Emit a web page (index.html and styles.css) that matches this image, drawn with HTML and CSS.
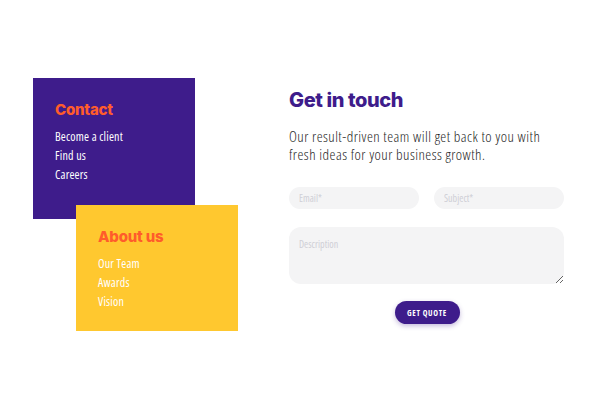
FILE: index.html
```html
<!DOCTYPE html>
<html>
<head>
<meta charset="utf-8">
<link rel="stylesheet" href="styles.css">
</head>
<body>
<div class="page">
  <div class="cards">
    <div class="card card-purple">
      <h3 class="card-title">Contact</h3>
      <ul class="links">
        <li>Become a client</li>
        <li>Find us</li>
        <li>Careers</li>
      </ul>
    </div>
    <div class="card card-yellow">
      <h3 class="card-title">About us</h3>
      <ul class="links">
        <li>Our Team</li>
        <li>Awards</li>
        <li>Vision</li>
      </ul>
    </div>
  </div>
  <div class="contact">
    <h2 class="title">Get in touch</h2>
    <p class="lead">Our result-driven team will get back to you with fresh ideas for your business growth.</p>
    <form class="form">
      <div class="row">
        <input class="field" type="text" placeholder="Email*">
        <input class="field" type="text" placeholder="Subject*">
      </div>
      <textarea class="field area" placeholder="Description"></textarea>
      <div class="actions">
        <button type="button" class="btn">GET QUOTE</button>
      </div>
    </form>
  </div>
</div>
</body>
</html>
```

FILE: styles.css
```css
html, body {
  margin: 0;
  padding: 0;
  background: #ffffff;
}
body {
  font-family: "Open Sans", sans-serif;
  font-stretch: 75%;
  width: 600px;
  height: 400px;
  overflow: hidden;
}
.page {
  display: flex;
  padding: 78px 0 0 33px;
}
.cards {
  width: 206px;
  display: flex;
  flex-direction: column;
}
.card {
  width: 162px;
  box-sizing: border-box;
  padding: 22px 0 0 22px;
}
.card-purple {
  background: #3e1c8b;
  height: 141px;
}
.card-yellow {
  background: #ffc82f;
  height: 126px;
  margin-top: -14px;
  margin-left: 43px;
}
.card-title {
  margin: 0;
  font-family: "Inter", sans-serif;
  font-stretch: normal;
  font-weight: 800;
  font-size: 15px;
  line-height: 20px;
  letter-spacing: -0.2px;
  color: #ff5c2b;
}
.links {
  list-style: none;
  margin: 7px 0 0 0;
  padding: 0;
}
.links li {
  color: #ffffff;
  font-size: 12px;
  line-height: 19px;
  letter-spacing: 0.2px;
}
.contact {
  margin-left: 50px;
  width: 276px;
  padding-top: 9px;
}
.title {
  margin: 0;
  font-family: "Inter", sans-serif;
  font-stretch: normal;
  font-weight: 800;
  font-size: 20px;
  line-height: 26px;
  letter-spacing: -0.4px;
  color: #3e1c8b;
}
.lead {
  margin: 14px 0 0 0;
  font-size: 15px;
  font-weight: 300;
  line-height: 18px;
  letter-spacing: 0.45px;
  color: #262626;
}
.form {
  margin-top: 24px;
}
.row {
  display: flex;
  gap: 15px;
}
.field {
  box-sizing: border-box;
  border: none;
  outline: none;
  background: #f4f4f5;
  border-radius: 11px;
  height: 22px;
  width: 130px;
  padding: 0 10px;
  font-family: "Open Sans", sans-serif;
  font-stretch: 75%;
  font-size: 10px;
  color: #555;
}
.field::placeholder {
  color: #cfcfd6;
}
.area {
  display: block;
  width: 275px;
  height: 57px;
  margin-top: 18px;
  padding: 10px;
  border-radius: 12px;
  resize: vertical;
}
.actions {
  display: flex;
  justify-content: center;
  margin-top: 17px;
}
.btn {
  border: none;
  background: #3e1c8b;
  color: #ffffff;
  height: 23px;
  width: 65px;
  border-radius: 12px;
  font-family: "Open Sans", sans-serif;
  font-stretch: 75%;
  font-weight: 700;
  font-size: 8px;
  letter-spacing: 0.7px;
  box-shadow: 0 2px 5px rgba(62, 28, 139, 0.3);
  padding: 0;
}
```
